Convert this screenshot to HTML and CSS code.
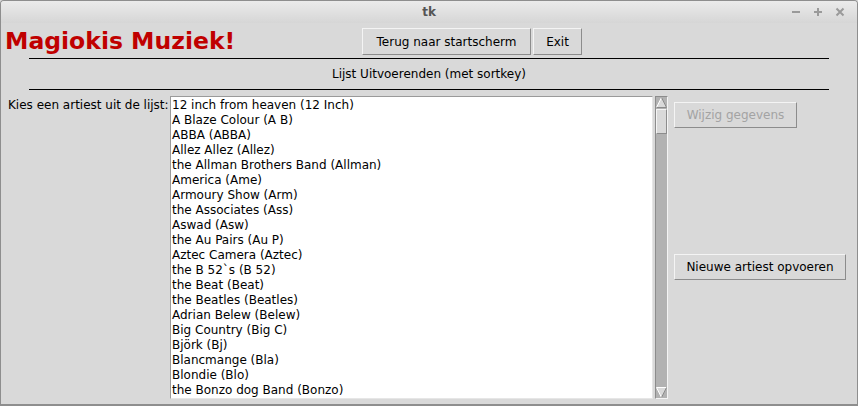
FILE: index.html
```html
<!DOCTYPE html>
<html>
<head>
<meta charset="utf-8">
<link rel="stylesheet" href="styles.css">
</head>
<body>
<div class="window">
  <div class="titlebar">
    <span class="tk">tk</span>
    <div class="controls">
      <svg class="ctl" width="10" height="10" viewBox="0 0 10 10"><rect x="1" y="4" width="8" height="2" fill="#9a9a9a"/></svg>
      <svg class="ctl" width="10" height="10" viewBox="0 0 10 10"><rect x="1" y="4" width="8" height="2" fill="#9a9a9a"/><rect x="4" y="1" width="2" height="8" fill="#9a9a9a"/></svg>
      <svg class="ctl" width="10" height="10" viewBox="0 0 10 10"><path d="M1.5 1.5 L8.5 8.5 M8.5 1.5 L1.5 8.5" stroke="#9a9a9a" stroke-width="2"/></svg>
    </div>
  </div>
  <div class="content">
    <div class="toprow">
      <h1 class="apptitle">Magiokis Muziek!</h1>
      <div class="topbuttons">
        <button class="tkbtn btn-back">Terug naar startscherm</button>
        <button class="tkbtn btn-exit">Exit</button>
      </div>
    </div>
    <div class="section">
      <div class="sep"></div>
      <div class="sectionlabel">Lijst Uitvoerenden (met sortkey)</div>
      <div class="sep"></div>
    </div>
    <div class="main">
      <div class="prompt">Kies een artiest uit de lijst:</div>
      <div class="listbox">
        <div class="item">12 inch from heaven (12 Inch)</div>
        <div class="item">A Blaze Colour (A B)</div>
        <div class="item">ABBA (ABBA)</div>
        <div class="item">Allez Allez (Allez)</div>
        <div class="item">the Allman Brothers Band (Allman)</div>
        <div class="item">America (Ame)</div>
        <div class="item">Armoury Show (Arm)</div>
        <div class="item">the Associates (Ass)</div>
        <div class="item">Aswad (Asw)</div>
        <div class="item">the Au Pairs (Au P)</div>
        <div class="item">Aztec Camera (Aztec)</div>
        <div class="item">the B 52`s (B 52)</div>
        <div class="item">the Beat (Beat)</div>
        <div class="item">the Beatles (Beatles)</div>
        <div class="item">Adrian Belew (Belew)</div>
        <div class="item">Big Country (Big C)</div>
        <div class="item">Björk (Bj)</div>
        <div class="item">Blancmange (Bla)</div>
        <div class="item">Blondie (Blo)</div>
        <div class="item">the Bonzo dog Band (Bonzo)</div>
      </div>
      <div class="scrollbar">
        <svg class="arrow" width="11" height="11" viewBox="0 0 11 11">
          <path d="M5.5 0.5 L10.5 10.5 L0.5 10.5 Z" fill="#d9d9d9"/>
          <path d="M0.5 10.5 L5.5 0.5" stroke="#ffffff" stroke-width="1"/>
          <path d="M5.5 0.5 L10.5 10.5 L0.5 10.5" stroke="#8a8a8a" stroke-width="1" fill="none"/>
        </svg>
        <div class="thumb"></div>
        <div class="trough"></div>
        <svg class="arrow" width="11" height="11" viewBox="0 0 11 11">
          <path d="M0.5 0.5 L10.5 0.5 L5.5 10.5 Z" fill="#d9d9d9"/>
          <path d="M0.5 0.5 L10.5 0.5 M0.5 0.5 L5.5 10.5" stroke="#ffffff" stroke-width="1"/>
          <path d="M10.5 0.5 L5.5 10.5" stroke="#8a8a8a" stroke-width="1"/>
        </svg>
      </div>
      <div class="side">
        <button class="tkbtn btn-edit" disabled>Wijzig gegevens</button>
        <button class="tkbtn btn-new">Nieuwe artiest opvoeren</button>
      </div>
    </div>
  </div>
</div>
</body>
</html>
```

FILE: styles.css
```css
html, body {
  margin: 0;
  padding: 0;
  background: #d9d9d9;
}

body {
  width: 858px;
  height: 406px;
  overflow: hidden;
  font-family: "DejaVu Sans", sans-serif;
  font-size: 12px;
  color: #000;
}

.window {
  box-sizing: border-box;
  width: 858px;
  height: 406px;
  border: 1px solid #8e8e8e;
  border-bottom-width: 2px;
  border-radius: 4px 4px 0 0;
  background: #d9d9d9;
  display: flex;
  flex-direction: column;
  overflow: hidden;
}

.titlebar {
  height: 22px;
  flex: none;
  background: linear-gradient(#ebebeb, #d6d6d6);
  display: flex;
  align-items: center;
  justify-content: center;
  position: relative;
}

.tk {
  font-weight: bold;
  font-size: 12px;
  color: #555;
}

.controls {
  position: absolute;
  right: 12px;
  top: 6px;
  display: flex;
  gap: 12px;
}

.ctl {
  display: block;
}

.content {
  flex: 1;
  display: flex;
  flex-direction: column;
}

.toprow {
  display: grid;
  grid-template-columns: 360px auto;
  align-items: center;
  height: 34px;
  padding-top: 1px;
}

.apptitle {
  margin: 0 0 0 4px;
  font-family: "DejaVu Sans", sans-serif;
  font-weight: bold;
  font-size: 23.5px;
  color: #c00000;
  line-height: 30px;
  white-space: nowrap;
}

.topbuttons {
  display: flex;
  gap: 1px;
  align-self: start;
  padding-top: 4px;
}

.tkbtn {
  box-sizing: border-box;
  font-family: "DejaVu Sans", sans-serif;
  font-size: 12px;
  color: #000;
  background: #d9d9d9;
  border: 1px solid;
  border-color: #f4f4f4 #8c8c8c #8c8c8c #f4f4f4;
  border-radius: 0;
  padding: 0;
  margin: 0 0 0 1px;
  height: 27px;
  white-space: nowrap;
}

.btn-back { width: 169px; }
.btn-exit { width: 49px; }

.section {
  display: flex;
  flex-direction: column;
  align-items: center;
}

.sep {
  width: 800px;
  height: 1px;
  background: #000;
}

.sectionlabel {
  height: 30px;
  line-height: 30px;
  text-align: center;
}

.main {
  display: flex;
  align-items: flex-start;
  margin-top: 6px;
}

.prompt {
  width: 162px;
  margin-left: 7px;
  padding-top: 2px;
  line-height: 15px;
  white-space: nowrap;
}

.listbox {
  box-sizing: border-box;
  width: 483px;
  height: 303px;
  background: #fff;
  border: 1px solid;
  border-color: #9a9a9a #e6e6e6 #e6e6e6 #9a9a9a;
  overflow: hidden;
  padding-left: 1px;
  padding-top: 1px;
}

.item {
  line-height: 15px;
  height: 15px;
  white-space: nowrap;
}

.scrollbar {
  box-sizing: border-box;
  width: 13px;
  height: 303px;
  margin-left: 2px;
  background: #b2b2b2;
  border: 1px solid;
  border-color: #8c8c8c #f4f4f4 #f4f4f4 #8c8c8c;
  display: flex;
  flex-direction: column;
}

.arrow {
  display: block;
  flex: none;
}

.thumb {
  flex: none;
  box-sizing: border-box;
  height: 25px;
  margin-top: 1px;
  background: #d9d9d9;
  border: 1px solid;
  border-color: #f4f4f4 #8c8c8c #8c8c8c #f4f4f4;
}

.trough {
  flex: 1;
}

.side {
  display: flex;
  flex-direction: column;
  align-items: flex-start;
  margin-left: 5px;
  padding-top: 6px;
}

.btn-edit {
  width: 123px;
  height: 26px;
  color: #a3a3a3;
}

.btn-new {
  width: 172px;
  height: 26px;
  margin-top: 126px;
}
```
